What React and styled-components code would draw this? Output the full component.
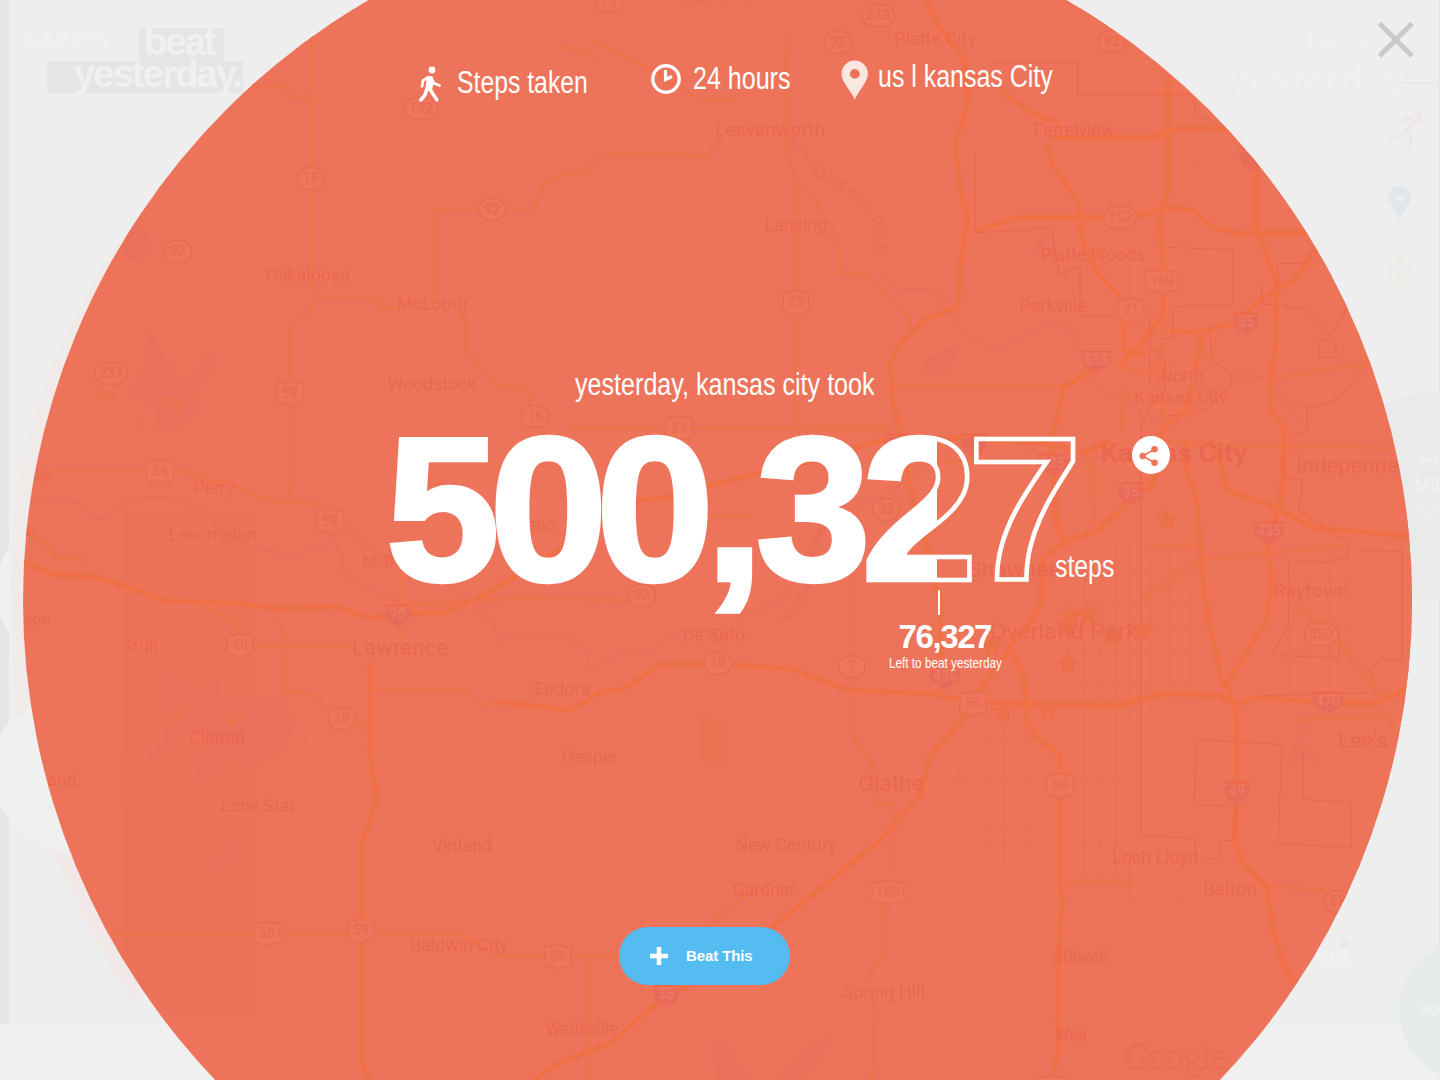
import React from "react";
import styled, { createGlobalStyle } from "styled-components";

const Global = createGlobalStyle`
  * { box-sizing: border-box; }
  body { margin: 0; background: #f0f0f0; overflow: hidden; font-family: "Liberation Sans", Arial, sans-serif; }
`;

const Screen = styled.main`
  position: relative;
  width: 1440px;
  height: 1080px;
  overflow: hidden;
  background: #f0f0f0;
  color: #fff;
`;

const Backdrop = styled.svg`
  position: absolute;
  inset: 0;
  width: 1440px;
  height: 1080px;
`;

const GhostLogo = styled.div`
  position: absolute;
  left: 47px;
  top: 28px;
  width: 196px;
  display: flex;
  flex-direction: column;
  color: #f0f0f0;
  font-weight: 700;
  font-size: 38px;
  letter-spacing: -1.8px;
`;

const GhostWord = styled.div`
  height: ${(p) => p.$h}px;
  width: ${(p) => p.$w}px;
  margin-left: ${(p) => p.$ml || 0}px;
  padding-left: ${(p) => p.$pl}px;
  line-height: ${(p) => p.$lh}px;
  background: #e5e5e5;
  white-space: nowrap;
`;

const Disc = styled.section`
  position: absolute;
  left: 23px;
  top: -94.5px;
  width: 1389px;
  height: 1389px;
  border-radius: 50%;
  overflow: hidden;
  background: #ed745b;
`;

const MapSvg = styled.svg`
  display: block;
  width: 1389px;
  height: 1389px;
  font-family: Roboto, sans-serif;
`;

const Overlay = styled.div`
  position: relative;
  display: flex;
  flex-direction: column;
  width: 1440px;
  height: 1080px;
`;

const Header = styled.header`
  display: flex;
  align-items: flex-start;
  height: 110px;
  padding: 58px 0 0 417px;
`;

const Fact = styled.div`
  display: flex;
  align-items: flex-start;
  width: ${(p) => p.$w}px;
  margin-top: ${(p) => p.$mt}px;
`;

const IconBox = styled.svg`
  flex: none;
  display: block;
  width: ${(p) => p.$w}px;
  height: ${(p) => p.$h}px;
  margin: ${(p) => p.$m || 0};
`;

const Condensed = styled.span`
  display: block;
  flex: none;
  width: ${(p) => p.$w}px;
  height: 36px;
  line-height: 36px;
  font-size: 31px;
  white-space: nowrap;
  transform: scaleX(${(p) => p.$ratio});
  transform-origin: 0 0;
`;

const CloseButton = styled.button`
  position: absolute;
  right: 26px;
  top: 20px;
  width: 36px;
  height: 40px;
  padding: 0;
  border: 0;
  background: none;
`;

const Lead = styled.div`
  margin-top: 257px;
  padding-left: 574.5px;
  height: 36px;
`;

const FigureRow = styled.div`
  display: flex;
  align-items: flex-start;
  height: 187px;
  margin-top: 22px;
  padding-left: 380px;
`;

const Figure = styled.svg`
  flex: none;
  width: 700px;
  height: 195px;
  font-family: "Liberation Sans", Arial, sans-serif;
  font-weight: 700;
  font-size: 204px;
`;

const Unit = styled.div`
  width: 77px;
  margin: 124px 0 0 -25px;
`;

const ShareButton = styled.button`
  display: flex;
  align-items: center;
  justify-content: center;
  width: 38px;
  height: 38px;
  margin-top: 10.5px;
  padding: 0;
  border: 0;
  border-radius: 50%;
  background: #fff;
`;

const Callout = styled.div`
  display: flex;
  flex-direction: column;
  margin-top: -22px;
  padding-left: 889px;
  height: 85px;
`;

const Tick = styled.i`
  width: 2px;
  height: 25px;
  margin-left: 48.5px;
  background: #fff;
`;

const Remaining = styled.strong`
  height: 36px;
  margin: 4px 0 0 9.5px;
  font-size: 33px;
  line-height: 36px;
  letter-spacing: -1.4px;
`;

const Note = styled.span`
  height: 18px;
  margin-top: -1px;
  font-size: 14.5px;
  line-height: 18px;
  white-space: nowrap;
  transform: scaleX(0.81);
  transform-origin: 0 0;
`;

const BeatButton = styled.button`
  display: flex;
  align-items: center;
  width: 171px;
  height: 58px;
  margin: 251.5px 0 0 618.5px;
  padding: 0 0 0 31px;
  border: 0;
  border-radius: 29px;
  background: #54bcf1;
  color: #fff;
  font: 700 15px/20px "Liberation Sans", Arial, sans-serif;
  letter-spacing: -0.1px;
  white-space: nowrap;
`;

const HIGHWAYS = [
  "M20,561 L55,574 L100,577 L165,600 L240,603 L278,608 L335,606 L372,618 L398,613 L445,612 L480,597 L517,575 L570,543 L600,512 L633,500 L663,498 L703,487 L750,475 L820,458 L880,440 L960,437 L1045,443 L1085,452 L1110,440",
  "M533,1080 L560,1062 L610,1043 L660,1000 L690,985 L775,925 L830,880 L880,840 L920,795 L930,755 L960,722 L980,690 L1013,643 L1040,607 L1043,557 L1063,542 L1097,530 L1123,507 L1130,492 L1150,488 L1158,470 L1162,430 L1185,410 L1192,385",
  "M500,701 L570,710 L600,692 L625,688 L660,664 L718,664 L790,668 L850,690 L930,693 L972,702 L1120,705 L1160,693 L1220,695 L1237,704 L1257,697 L1328,702 L1377,703 L1410,686",
  "M370,660 V755 L377,800 L362,843 V1060 L370,1085",
  "M1093,368 L1063,388 L1057,420 L1050,437 L1057,527 L1067,547",
  "M1185,440 L1187,470 L1197,500 L1200,547 L1205,600 L1223,687",
  "M1210,440 L1220,460 L1227,490 L1277,507 L1313,527 L1412,536",
  "M1277,283 L1275,350 L1270,380 V407 L1285,430 L1280,507 L1268,540 L1271,580 L1267,620 L1227,683 L1237,715 V790 L1235,843 L1243,863 L1267,887 L1273,930 L1283,963 L1295,983",
  "M1008,650 L1015,655 L1023,673 L1027,720 L1037,737 L1060,755 V880 L1062,900 L1058,960 V1055 L1050,1080",
  "M1168,75 V190 L1160,213 L1163,267 V315 L1140,345 L1120,365",
  "M1000,90 L1033,113 L1060,122",
  "M1050,137 H1150 L1180,128 H1232",
  "M1047,143 L1052,163 L1077,200 L1083,240 L1093,267 L1120,297 L1125,350 L1145,355",
  "M977,230 L1017,217 H1135 L1167,207 L1193,210 L1213,227 L1237,233 H1312",
  "M1257,165 V228 L1277,283",
  "M1320,245 L1293,280 L1263,297 L1235,322 L1200,332 L1170,330",
  "M925,-5 L940,28 L965,60 L968,100 L955,145 L960,187 L968,213 L960,267 L958,307 L927,318 L900,343 L890,363 L893,403 L902,440 L913,500 L927,547 L940,600 L942,690",
  "M1200,332 V350 L1195,370",
];

const ROADS = [
  "M312,36 V310 Q291,318 290,332 V385 M293,400 V475 L287,500",
  "M252,85 H287 V96 H312",
  "M312,296 H378 L380,307 H395 M460,308 L466,325 V350 L482,367 L497,385 H520 L531,393 V405",
  "M433,305 V208 H533 L545,181 L562,175 L580,173 L605,153 H688 L705,157 L714,148 L722,135",
  "M50,471 H188 L203,480 L225,481 L260,497 L285,502 L325,504 M345,525 L370,548 L400,560 V640",
  "M24,532 L40,537 L55,557 L83,558 L90,575",
  "M200,607 L230,617 L240,632 M255,646 H350 M273,610 L283,633 V690 L310,693 L332,712 M355,724 H370",
  "M370,690 H465 L480,705 L505,701",
  "M110,933 H460 L482,947 L500,955 H622 M589,956 V1080",
  "M708,925 L745,895 L775,880",
  "M783,130 L795,180 V410 Q796,428 815,430 H890 M800,183 L817,203 L840,243 V273 H863 L887,297 L910,317 V330",
  "M568,427 H670 M692,427 H890 M709,515 H750 M400,605 L520,598 L630,600",
  "M853,500 V735 L873,765 V803 H895 V873 M883,903 L885,950 L868,977 L875,1013 L872,1080",
  "M790,32 L785,70 V130 M560,45 L600,58 M735,100 H700 L650,68 L590,40",
  "M1267,887 L1320,888 L1330,895 M1293,605 L1330,630 L1365,675 L1385,700",
  "M1123,385 L1122,430 M1090,450 L1095,525 M893,386 H1063 M893,460 L1060,462 M1165,440 L1220,445 L1412,448",
  "M1270,378 L1370,362 M1237,233 L1320,228 M1140,600 L1200,560 L1350,545 M1145,545 H1200",
  "M1290,720 L1385,715 L1398,735 M1060,880 H1130",
  "M1120,365 L1145,372 L1175,360 M1165,315 L1158,375 L1165,430",
];

const STREETS = [
  "M480,60 H430 V150 M360,107 H405 M664,155 V300 M664,200 H775 V340 M664,318 H850 M664,340 H935 M742,300 V420 M706,210 V245 M690,130 V195 M720,120 V200",
  "M40,745 H125 M120,750 V810 H275 M306,780 V735 H370 M380,779 H500 M500,600 V790 M568,720 V940 M500,845 H770 M870,780 H900 V1070",
  "M110,745 H640 M145,940 V1080 M152,1020 H262 V1065 M380,1035 H480 M530,660 V900 M765,905 V1065 M690,660 H790 V900",
  "M850,740 H1060 M850,780 H1150 M850,825 H1060 M960,740 V1060 M985,845 H1130 V1010 M1005,900 H1180 M1165,945 V1080 M1180,860 V1075",
  "M985,700 V880 M1005,700 V870 M1025,730 V880 M1085,560 V890 M1100,550 V880 M1115,540 V880 M1130,540 V720 M1150,560 V710 M1170,550 V700 M1190,590 V700",
  "M900,470 H1060 M900,490 H1150 M900,520 H1200 M1060,575 H1265 M1060,600 H1265 M1060,625 H1265 M1060,650 H1225 M1060,680 H1225",
  "M1285,460 H1400 M1290,480 H1405 M1290,590 V690 M1310,550 V700 M1330,550 V690 M1350,560 V700 M1275,580 H1400 M1280,625 H1400 M1280,655 H1400",
  "M965,45 V170 M985,62 V210 M1020,140 V240 M1100,140 V230 M1110,160 H1240 M1130,250 V330 M1195,130 V210 M1220,240 V340 M1240,240 V380 M1045,335 H1130 M900,380 V430 M1000,380 V440",
  "M293,600 V730 M305,610 V740 M320,625 V740 M335,620 V760 M350,610 V740 M290,670 H380 M380,650 V770 M395,650 V760 M410,650 V740 M425,650 V740 M365,670 H440 M365,720 H440",
  "M640,700 H700 V760 H780 M840,580 V820 M870,660 V800 M885,650 V820 M905,660 V830 M920,650 V800 M940,700 V820 M690,1000 H800 M820,1020 H1200",
];

const BORDERS = [
  "M993,62 H1078 V94 H1190 M1195,100 V115 L1212,120 M975,150 V232 L1033,230 L1034,227 H1053 V240 L1060,275 L1080,265 V315 H1150 V385",
  "M1168,247 L1233,249 V304 L1173,306 V338 H1160 M1278,290 V263 H1303 L1316,245 M1262,285 V304 H1287 V307 H1304 L1330,335 L1347,308",
  "M1319,340 H1336 V357 H1319 Z M1300,405 Q1330,410 1350,385 L1370,360 M1307,405 V430 L1290,438 L1297,450 L1285,455 V478 H1302 V495 L1298,510 L1348,542 V558 H1334 L1333,562 L1289,561 V625 L1271,655 L1339,657 V625 M1357,550 L1402,551 V660 L1380,658 L1370,670 L1376,692 L1262,695",
  "M1141,410 V835 L1195,838 V855 M1202,858 H1216 Q1223,850 1220,840 H1233 L1236,806 L1194,804 L1197,739 L1282,744 L1278,843 L1351,847 V802 L1303,799 V750",
  "M1142,425 L1148,408 L1165,390 V360 L1150,345 M1167,415 H1192 L1210,405 L1232,382 V373 L1212,360 L1210,330",
];

const RIVERS = [
  "M24,497 L60,503 L82,502 Q90,522 102,518 L130,500 Q170,490 205,512 Q225,540 260,548 Q290,556 310,550 L335,540 Q345,555 342,570 Q365,590 398,602",
  "M440,580 Q480,600 500,640 M500,640 Q590,620 590,670 Q620,645 650,655 Q690,610 720,640 Q740,610 775,605 Q800,580 815,540 Q845,500 880,500 Q920,470 940,455 Q975,430 1010,440 Q1070,470 1110,455",
  "M790,136 L815,165 M878,268 Q885,285 905,289 Q940,285 950,310 Q965,345 1005,346 Q1045,322 1060,324 Q1080,330 1080,350 Q1090,395 1145,410 Q1180,440 1200,400 Q1245,360 1275,385 Q1290,410 1310,430",
];

const WATER = [
  "M150,330 L158,350 L170,365 L178,385 L200,370 L210,350 L215,365 L190,392 L198,408 L170,432 L160,428 L155,405 L130,390 L145,370 Z",
  "M130,215 L150,240 L140,262 L125,255 Z",
  "M170,670 L185,685 L205,690 L215,680 L225,700 L285,698 L290,735 L270,758 L238,762 L205,775 L192,785 L200,762 L230,740 L190,728 L150,758 L175,722 L168,700 Z",
  "M712,1040 L725,1047 L738,1065 L748,1080 L720,1080 Z M827,1035 L820,1055 L795,1080 L780,1080 L800,1060 Z",
  "M225,845 L240,850 L225,866 L210,870 L222,858 Z M1308,720 L1302,742 L1320,760 L1300,758 L1285,770 L1296,740 Z",
  "M960,345 L945,370 L928,375 L925,360 L940,352 Z M1040,237 L1048,245 L1034,256 Z",
];

const PARKS = [
  "M700,712 L725,722 L726,765 L700,762 Z",
  "M96,385 L118,392 L115,405 L98,400 Z M165,395 L185,400 L178,415 L160,405 Z M130,410 L150,425 L140,430 Z",
  "M180,700 L190,712 L170,725 Z M225,710 L250,715 L228,728 Z M225,760 L245,765 L235,772 Z",
];

const PLACES = [
  ["Platte City", 935, 45, 18, 82], ["Leavenworth", 770, 136, 18, 110],
  ["Ferrelview", 1074, 136, 18, 80], ["Lansing", 796, 231, 18, 63], ["Oskaloosa", 308, 281, 18, 84],
  ["McLouth", 432, 310, 18, 70], ["Platte Woods", 1093, 261, 18, 105], ["Parkville", 1053, 312, 18, 67],
  ["Woodstock", 432, 390, 18, 89], ["North", 1182, 382, 18, 43], ["Kansas City", 1181, 403, 17, 94],
  ["Perry", 214, 494, 18, 40], ["Lecompton", 213, 541, 18, 89], ["Reno", 536, 531, 18, 41],
  ["Midl", 378, 567, 18, 31], ["Stull", 140, 653, 18, 35], ["Lawrence", 400, 655, 22, 96],
  ["Independence", 1365, 473, 22, 138], ["Raytown", 1311, 597, 18, 75], ["Shawnee", 1014, 577, 22, 92],
  ["Overland Park", 1064, 639, 22, 148], ["De Soto", 714, 641, 18, 63], ["Eudora", 562, 695, 18, 56],
  ["Clinton", 217, 744, 18, 56], ["Lone Star", 258, 812, 18, 75], ["Hesper", 590, 763, 18, 56],
  ["Olathe", 891, 791, 22, 65], ["Vinland", 462, 852, 18, 60], ["New Century", 786, 851, 18, 101],
  ["Gardner", 764, 896, 18, 63], ["Baldwin City", 459, 951, 18, 98], ["Spring Hill", 884, 998, 18, 82],
  ["Wellsville", 582, 1035, 18, 73], ["Stilwell", 1080, 963, 18, 56], ["Wea", 1071, 1041, 18, 32],
  ["Loch Lloyd", 1155, 864, 18, 86], ["Belton", 1230, 895, 18, 54], ["Lee's", 1363, 748, 22, 50],
  ["ville", 38, 481, 17, 28], ["n", 31, 536, 17, 9], ["son", 37, 625, 17, 27], ["and", 62, 786, 17, 29],
  ["Tonganoxie", 710, 1, 18, 80],
];

const SHIELDS = [
  ["r", 311, 178, "16"], ["r", 178, 251, "92"], ["r", 492, 209, "92"], ["r", 421, 108, "192"],
  ["r", 838, 42, "92"], ["r", 1112, 41, "92"], ["r", 878, 15, "273"], ["r", 609, 1, "73"],
  ["r", 1120, 217, "152"], ["r", 111, 373, "237"], ["r", 535, 416, "16"], ["r", 886, 509, "32"],
  ["r", 642, 595, "92"], ["r", 342, 718, "10"], ["r", 718, 663, "10"], ["r", 852, 666, "7"],
  ["r", 1321, 634, "350"], ["r", 1338, 901, "58"],
  ["u", 290, 393, "59"], ["u", 160, 471, "24"], ["u", 330, 521, "59"], ["u", 240, 645, "40"],
  ["u", 679, 428, "24"], ["u", 796, 302, "73"], ["u", 1162, 281, "169"], ["u", 1131, 310, "71"],
  ["u", 267, 933, "56"], ["u", 361, 930, "59"], ["u", 558, 956, "56"], ["u", 888, 892, "169"],
  ["u", 1060, 785, "69"], ["u", 973, 703, "56"], ["u", 1052, 1087, ""],
  ["i", 398, 614, "70"], ["i", 666, 994, "35"], ["i", 1131, 492, "35"], ["i", 1237, 791, "49"],
  ["i", 1246, 322, "35"], ["i", 1096, 360, "635"], ["i", 1269, 531, "435"], ["i", 1328, 701, "470"],
  ["i", 945, 676, "435"], ["i", 1053, 463, "635"], ["i", 974, 443, ""], ["i", 897, 443, ""],
  ["i", 1252, 157, ""],
];

const STARS = [
  [1167, 519], [1071, 616], [1088, 614], [1112, 635], [1142, 630], [1068, 663], [1003, 712], [1048, 711], [992, 647], [1066, 627],
];

const star = (cx, cy) =>
  Array.from({ length: 10 }, (_, i) => {
    const r = i % 2 ? 4.8 : 11;
    const a = (Math.PI / 5) * i - Math.PI / 2;
    return `${(cx + r * Math.cos(a)).toFixed(1)},${(cy + r * Math.sin(a)).toFixed(1)}`;
  }).join(" ");

function Shield({ kind, x, y, label }) {
  const w = label.length > 2 ? 17 : 14;
  return (
    <g transform={`translate(${x} ${y})`}>
      {kind === "r" && (
        <rect x={-w + 0.5} y="-11" width={w * 2 - 1} height="22" rx="11" fill="#ed765d" stroke="#eb6b50" strokeWidth="1.4" />
      )}
      {kind === "u" && (
        <path
          d={`M${-w + 2},-11 Q${-w + 6},-9 -4,-11 Q0,-13 4,-11 Q${w - 6},-9 ${w - 2},-11 L${w},-7 Q${w - 3},-1 ${w},5 Q${w},10 6,10 Q2,11 0,13 Q-2,11 -6,10 Q${-w},10 ${-w},5 Q${-w + 3},-1 ${-w},-7 Z`}
          fill="#ed765d" stroke="#eb6b50" strokeWidth="1.4"
        />
      )}
      {kind === "i" && (
        <>
          <path d={`M${-w + 1},-10 H${w - 1} V-8 H${-w + 1} Z`} fill="#eb664a" />
          <path d={`M${-w + 2},-6 H${w - 2} Q${w + 1},2 8,8 L0,13 L-8,8 Q${-w - 1},2 ${-w + 2},-6 Z`} fill="#e86a57" />
        </>
      )}
      {label && (
        <text x="0" y="4.5" textAnchor="middle" fontSize="14" fontWeight="500" fill={kind === "i" ? "#ed7b65" : "#eb6a50"}>
          {label}
        </text>
      )}
    </g>
  );
}

function RegionMap() {
  return (
    <MapSvg viewBox="23 -94.5 1389 1389">
      <path d="M1080,0 H1412 V900 H1060 Z M880,420 H1100 V900 H985 Z" fill="#ed7458" />
      <g fill="none" strokeLinejoin="round">
        <g stroke="#eb7054" strokeWidth="1" opacity=".55">{STREETS.map((d) => <path key={d} d={d} />)}</g>
        <g stroke="#e96f5c" strokeWidth="3" opacity=".65">{RIVERS.map((d) => <path key={d} d={d} />)}</g>
      </g>
      <g fill="#ea6d5c" stroke="#ea6d5c" strokeWidth="3" strokeLinejoin="round" opacity=".5">{WATER.map((d) => <path key={d} d={d} />)}</g>
      <g fill="#ee7351" opacity=".7">{PARKS.map((d) => <path key={d} d={d} />)}</g>
      <g fill="none" strokeLinejoin="round">
        <g stroke="#ee724e" strokeWidth="4">{ROADS.map((d) => <path key={d} d={d} />)}</g>
        <g stroke="#ef6f46" strokeWidth="5.5">{HIGHWAYS.map((d) => <path key={d} d={d} />)}</g>
        <g stroke="#ec674c" strokeWidth="1.2">{BORDERS.map((d) => <path key={d} d={d} />)}</g>
      </g>
      <g fill="#ee7048" stroke="#eb6b4b" strokeWidth="1">
        {STARS.map(([x, y]) => <polygon key={`${x}-${y}`} points={star(x, y)} />)}
      </g>
      {SHIELDS.map(([kind, x, y, label]) => <Shield key={`${x}-${y}`} kind={kind} x={x} y={y} label={label} />)}
      <g fill="#ea674f" textAnchor="middle">
        {PLACES.map(([name, x, y, size, w]) => (
          <text key={name} x={x} y={y - 0.8} fontSize={size} textLength={w} lengthAdjust="spacingAndGlyphs">{name}</text>
        ))}
        <text x="1174" y="461" fontSize="26" fontWeight="700" textLength="147" lengthAdjust="spacingAndGlyphs">Kansas City</text>
      </g>
      <path id="missouri" d="M810,175 Q884,202 876,258" fill="none" />
      <g fill="#eb6b53" fontSize="17">
        <text letterSpacing=".6"><textPath href="#missouri">Missouri River</textPath></text>
        <text transform="translate(790 624) rotate(-58)" textLength="52">Kansas</text>
        <text transform="translate(816 562) rotate(-74)" textLength="42">River</text>
      </g>
      <text x="1124" y="1068" fontSize="38" textLength="102" lengthAdjust="spacingAndGlyphs" fill="none" stroke="#ea6a52" strokeWidth="1" fontFamily="Liberation Serif, serif">Google</text>
    </MapSvg>
  );
}

function GhostPage() {
  return (
    <Backdrop viewBox="0 0 1440 1080">
      <rect width="1440" height="1024" fill="#eeeeee" />
      <rect width="9" height="1024" fill="#e5e5e5" />
      <rect x="1438" width="2" height="950" fill="#e6e6e6" />
      <circle cx="72.5" cy="590" r="76.7" fill="#f0f0f0" />
      <circle cx="70" cy="771" r="78" fill="#f0f0f0" />
      <path d="M330,30 Q10,270 10,585 Q11,660 18,718 L40,700 V500 L200,200 Z" fill="#f0eae8" />
      <path d="M52,848 L72,857 L137,975 V1007 Q90,945 52,848 Z" fill="#f0e9e7" />
      <circle cx="1430" cy="496" r="103" fill="#eaeaea" />
      <circle cx="1469" cy="1011" r="70" fill="#e5ebeb" />
      <path d="M1372,83 H1438" stroke="#e8e8e8" strokeWidth="2" />
      <g fill="none" stroke="#eee6e4" strokeWidth="3" strokeLinecap="round" strokeLinejoin="round">
        <path d="M1401,121 L1409,118 L1413,120 L1406,131 L1411,137 L1410,148 M1406,131 L1400,137 H1390 M1413,120 L1416,124 L1422,120" />
        <circle cx="1418" cy="115" r="2.5" fill="#eee6e4" />
      </g>
      <path d="M1399.500,221 Q1397,213 1390,205 A12,12 0 1 1 1409,205 Q1402,213 1399.500,221 Z" fill="#e1e8ec" />
      <circle cx="1399.500" cy="198" r="4" fill="#eeeeee" />
      <circle cx="1400" cy="274" r="11" fill="none" stroke="#efebe5" strokeWidth="2.5" />
      <circle cx="1400" cy="274" r="5" fill="#efebe5" />
      <path d="M1395,259 H1405 M1395,289 H1405" stroke="#efebe5" strokeWidth="4" />
      <path d="M1339,947 L1344.500,937 L1350,947 Z" fill="#e1e9ee" />
      <g fill="#f1f1f1" fontFamily="Liberation Sans, sans-serif" fontWeight="700">
        <text x="24" y="46" fontSize="19" textLength="86" fill="#f0f0f0">GARMIN</text>
        <text x="1305" y="54" fontSize="38" fill="#efefef">beat</text>
        <text x="1228" y="92" fontSize="38" fill="#efefef">yesterday.</text>
        <text x="1415" y="491" fontSize="18">MIL</text>
        <text x="1417" y="517" fontSize="17" fontWeight="400">124</text>
        <text x="1419" y="463" fontSize="9">Wed</text>
        <text x="1315" y="965" fontSize="18">MIN</text>
        <text x="1419" y="1015" fontSize="12">MOS</text>
      </g>
    </Backdrop>
  );
}

const DIGITS = [
  ["5", 386, 1], ["0", 489.5, 1.04], ["0", 596, 1.04], [",", 705, 1.04], ["3", 756, 1.01], ["2", 861.5, 1.025], ["7", 967.5, 1.01],
];

function Digits() {
  return DIGITS.map(([ch, x, sx]) => (
    <text key={x} transform={`translate(${x} 579.5) scale(${sx} 1)`}>{ch}</text>
  ));
}

export default function App() {
  return (
    <Screen>
      <Global />
      <GhostPage />
      <GhostLogo>
        <GhostWord $h={33} $w={85} $ml={92} $pl={5} $lh={28}>beat</GhostWord>
        <GhostWord $h={32} $w={196} $pl={27} $lh={26}>yesterday.</GhostWord>
      </GhostLogo>
      <Disc><RegionMap /></Disc>
      <Overlay>
        <Header>
          <Fact $w={233} $mt={7}>
            <IconBox $w={26} $h={38} viewBox="417 65 26 38" $m="0 13.5px 0 0">
              <circle cx="432" cy="70" r="3.4" fill="#fff" />
              <path d="M427,76.500 L432,76 L434,82 L432,90 L425,91 Z" fill="#fff" />
              <g fill="none" stroke="#fff" strokeLinecap="round" strokeLinejoin="round">
                <path d="M428,77.500 L423,80.500 L422,86.500 M431.500,78 L434,83.300 L439.600,85.500" strokeWidth="2.7" />
                <path d="M429,88 L432,92.500 L436.800,99.800 M426.500,90 L425,95 L420.800,100" strokeWidth="3.5" />
              </g>
            </IconBox>
            <Condensed $w={131} $ratio={0.799}>Steps taken</Condensed>
          </Fact>
          <Fact $w={191} $mt={3}>
            <IconBox $w={32} $h={32} viewBox="650 63 32 32" $m="2px 10.5px 0 0">
              <circle cx="666" cy="79" r="13.200" fill="none" stroke="#fff" strokeWidth="3.4" />
              <path d="M665.500,70 V79.500 L672,76.500" fill="none" stroke="#fff" strokeWidth="3.2" />
            </IconBox>
            <Condensed $w={98} $ratio={0.808}>24 hours</Condensed>
          </Fact>
          <Fact $w={214} $mt={1}>
            <IconBox $w={28} $h={40} viewBox="841 60 28 40" $m="1px 8.5px 0 0">
              <path fillRule="evenodd" d="M854.800,99.500 C851,91 841.500,82 841.500,73.800 A13.200,13.300 0 0 1 867.900,73.800 C867.900,82 858.500,91 854.800,99.500 Z M854.800,69 A4.900,4.900 0 1 0 854.800,78.800 A4.900,4.900 0 1 0 854.800,69 Z" fill="#fff" fillOpacity=".82" />
            </IconBox>
            <Condensed $w={175} $ratio={0.805}>us l kansas City</Condensed>
          </Fact>
        </Header>
        <CloseButton aria-label="Close">
          <IconBox $w={36} $h={40} viewBox="1378 20 36 40">
            <path d="M1379.500,23.500 L1412,56 M1412,23.500 L1379.500,56" stroke="#c9c9c9" strokeWidth="5" />
          </IconBox>
        </CloseButton>
        <Lead><Condensed $w={301} $ratio={0.81}>yesterday, kansas city took</Condensed></Lead>
        <FigureRow>
          <Figure viewBox="380 425 700 195">
            <clipPath id="progress"><rect x="380" y="425" width="557" height="195" /></clipPath>
            <g fill="#fff" clipPath="url(#progress)"><Digits /></g>
            <g fill="none" stroke="#fff" strokeWidth="4.5"><Digits /></g>
          </Figure>
          <Unit><Condensed $w={60} $ratio={0.8}>steps</Condensed></Unit>
          <ShareButton aria-label="Share">
            <IconBox $w={38} $h={38} viewBox="1132 435.500 38 38">
              <path d="M1154.500,449 L1142.500,455.500 L1154.500,462" fill="none" stroke="#ed745b" strokeWidth="1.5" />
              <g fill="#ed745b">
                <circle cx="1142.700" cy="455.500" r="3.200" />
                <circle cx="1154.500" cy="448.700" r="3.300" />
                <circle cx="1154.500" cy="462.300" r="3.300" />
              </g>
            </IconBox>
          </ShareButton>
        </FigureRow>
        <Callout>
          <Tick />
          <Remaining>76,327</Remaining>
          <Note>Left to beat yesterday</Note>
        </Callout>
        <BeatButton>
          <IconBox $w={18} $h={18} viewBox="0 0 18 18" $m="1px 18.500px 0 0">
            <path d="M0,9 H18 M9,0 V18" stroke="#fff" strokeWidth="4.6" />
          </IconBox>
          Beat This
        </BeatButton>
      </Overlay>
    </Screen>
  );
}
